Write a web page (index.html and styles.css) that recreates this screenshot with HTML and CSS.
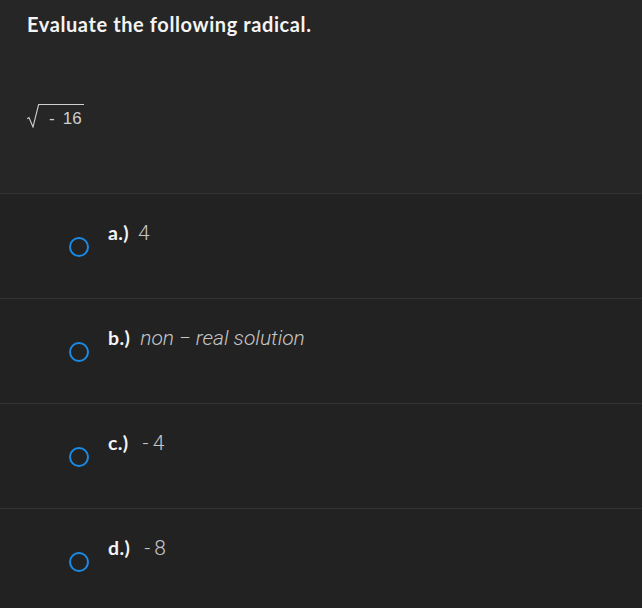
FILE: index.html
```html
<!DOCTYPE html>
<html>
<head>
<meta charset="utf-8">
<link rel="stylesheet" href="styles.css">
</head>
<body>
<div class="question">
  <h1 class="title">Evaluate the following radical.</h1>
  <div class="math">
    <svg class="radix" width="12" height="25" viewBox="0 0 12 25"><path d="M0.3 15.8 L2 14.6 L6 24 L11.6 1.5 L12 1.5" fill="none" stroke="#d0d0d0" stroke-width="1.1" stroke-linejoin="miter"/></svg>
    <span class="radicand"><span class="op">-</span><span>16</span></span>
  </div>
</div>
<div class="options">
  <div class="option">
    <span class="radio"></span>
    <span class="label">a.)</span>
    <span class="value">4</span>
  </div>
  <div class="option">
    <span class="radio"></span>
    <span class="label">b.)</span>
    <span class="value italic">non − real solution</span>
  </div>
  <div class="option">
    <span class="radio"></span>
    <span class="label">c.)</span>
    <span class="value neg"><span class="op">-</span>4</span>
  </div>
  <div class="option">
    <span class="radio"></span>
    <span class="label">d.)</span>
    <span class="value neg"><span class="op">-</span>8</span>
  </div>
</div>
</body>
</html>
```
FILE: styles.css
```css
html, body {
  margin: 0;
  padding: 0;
  background: #262626;
}
body {
  font-family: Lato, "Liberation Sans", sans-serif;
  color: #f2f2f2;
}
.question {
  height: 193px;
  padding: 12px 27px 0;
  box-sizing: border-box;
  background: #262626;
}
.title {
  margin: 0;
  font-size: 20px;
  font-weight: 700;
  line-height: 24px;
  letter-spacing: 0.6px;
  color: #f4f4f4;
}
.math {
  display: flex;
  align-items: flex-start;
  margin-top: 67px;
  font-family: "Liberation Sans", Arial, sans-serif;
  font-size: 17px;
  color: #cfcfcf;
}
.radix {
  display: block;
  flex: none;
}
.radicand {
  display: block;
  margin-top: 1px;
  border-top: 1px solid #d0d0d0;
  padding: 4px 2px 0 10px;
  line-height: 20px;
}
.radicand .op {
  margin-right: 8px;
}
.options {
  background: #222222;
}
.option {
  display: flex;
  align-items: baseline;
  height: 105px;
  box-sizing: border-box;
  border-top: 1px solid #333333;
  padding-left: 69px;
  padding-top: 27px;
}
.radio {
  align-self: flex-start;
  width: 16px;
  height: 16px;
  border: 2px solid #1b8ae4;
  border-radius: 50%;
  margin-top: 16px;
  flex: none;
}
.label {
  margin-left: 19px;
  font-weight: 700;
  font-size: 19.5px;
  line-height: 24px;
  letter-spacing: 0.4px;
  color: #f4f4f4;
}
.value {
  margin-left: 9px;
  font-family: Roboto, "Liberation Sans", sans-serif;
  font-weight: 300;
  font-size: 21px;
  line-height: 24px;
  color: #c6c6c6;
}
.value.neg {
  margin-left: 14px;
}
.value.neg .op {
  margin-right: 4px;
}
.value.italic {
  font-style: italic;
  font-size: 21px;
  margin-left: 10px;
}
```
